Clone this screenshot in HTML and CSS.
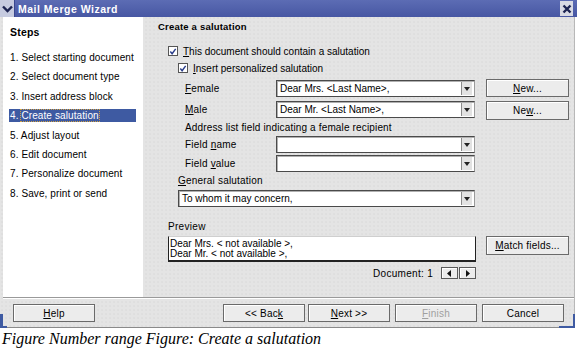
FILE: index.html
```html
<!DOCTYPE html>
<html lang="en">
<head>
  <meta charset="UTF-8" />
  <title>Mail Merge Wizard</title>
  <link rel="stylesheet" href="styles.css">
</head>
<body>
  <div class="window">
    <div class="titlebar">
      <div class="tb-icon">
        <svg width="11" height="8" viewBox="0 0 11 8"><path d="M1 1.5 L5.5 6 L10 1.5" fill="none" stroke="#1c2452" stroke-width="2.4"/></svg>
      </div>
      <div class="tb-title">Mail Merge Wizard</div>
      <div class="tb-close">
        <svg width="10" height="10" viewBox="0 0 10 10"><path d="M1.5 1.5 L8.5 8.5 M8.5 1.5 L1.5 8.5" stroke="#1c2452" stroke-width="2.4"/></svg>
      </div>
    </div>

    <div class="main">
      <!-- steps list -->
      <div class="steps">
        <div class="steps-head">Steps</div>
        <ul class="step-list">
          <li>1. Select starting document</li>
          <li>2. Select document type</li>
          <li>3. Insert address block</li>
          <li class="active"><span>4. <em>Create salutation</em></span></li>
          <li>5. Adjust layout</li>
          <li>6. Edit document</li>
          <li>7. Personalize document</li>
          <li>8. Save, print or send</li>
        </ul>
      </div>

      <!-- page content -->
      <div class="page">
        <div class="page-title">Create a salutation</div>

        <label class="check check-1"><span class="box"><svg width="9" height="9" viewBox="0 0 9 9"><path d="M1.5 4.5 L3.5 7 L7.5 1.5" fill="none" stroke="#2a3d8a" stroke-width="1.6"/></svg></span><span><u>T</u>his document should contain a salutation</span></label>
        <label class="check check-2"><span class="box"><svg width="9" height="9" viewBox="0 0 9 9"><path d="M1.5 4.5 L3.5 7 L7.5 1.5" fill="none" stroke="#2a3d8a" stroke-width="1.6"/></svg></span><span><u>I</u>nsert personalized salutation</span></label>

        <div class="field-row row-female">
          <span class="field-label"><u>F</u>emale</span>
          <div class="select"><span class="select-text">Dear Mrs. &lt;Last Name&gt;,</span><span class="drop"></span></div>
          <button class="btn btn-side"><u>N</u>ew...</button>
        </div>
        <div class="field-row row-male">
          <span class="field-label"><u>M</u>ale</span>
          <div class="select"><span class="select-text">Dear Mr. &lt;Last Name&gt;,</span><span class="drop"></span></div>
          <button class="btn btn-side">Ne<u>w</u>...</button>
        </div>

        <div class="plain-label">Address list field indicating a female recipient</div>

        <div class="field-row row-fname">
          <span class="field-label">Field <u>n</u>ame</span>
          <div class="select"><span class="select-text"></span><span class="drop"></span></div>
        </div>
        <div class="field-row row-fvalue">
          <span class="field-label">Field <u>v</u>alue</span>
          <div class="select"><span class="select-text"></span><span class="drop"></span></div>
        </div>

        <div class="general-label"><u>G</u>eneral salutation</div>
        <div class="select select-wide"><span class="select-text">To whom it may concern,</span><span class="drop"></span></div>

        <div class="preview-label">Preview</div>
        <div class="preview-row">
          <div class="preview-box">
            <div>Dear Mrs. &lt; not available &gt;,</div>
            <div>Dear Mr. &lt; not available &gt;,</div>
          </div>
          <button class="btn btn-side btn-match"><u>M</u>atch fields...</button>
        </div>

        <div class="doc-row">
          <span class="doc-text">Document: 1</span>
          <button class="arrow"><svg width="5" height="7" viewBox="0 0 5 7"><path d="M4 0 L0 3.5 L4 7 Z" fill="#111"/></svg></button>
          <button class="arrow"><svg width="5" height="7" viewBox="0 0 5 7"><path d="M1 0 L5 3.5 L1 7 Z" fill="#111"/></svg></button>
        </div>
      </div>
    </div>

    <div class="separator"></div>

    <div class="button-bar">
      <button class="btn btn-help"><u>H</u>elp</button>
      <div class="nav-buttons">
        <button class="btn">&lt;&lt; Bac<u>k</u></button>
        <button class="btn btn-next"><u>N</u>ext &gt;&gt;</button>
        <button class="btn btn-gap disabled"><u>F</u>inish</button>
        <button class="btn btn-gap">Cancel</button>
      </div>
    </div>
    <span class="corner corner-left"></span>
    <span class="corner corner-right"></span>
  </div>

  <p class="caption">Figure Number range Figure: Create a salutation</p>
</body>
</html>
```

FILE: styles.css
```css
* {
  margin: 0;
  padding: 0;
  box-sizing: border-box;
}

body {
  background: #fff;
  font-family: 'Liberation Sans', Arial, sans-serif;
  font-size: 10px;
  color: #000;
  width: 577px;
  height: 353px;
  overflow: hidden;
}

.window {
  position: relative;
  width: 575px;
  height: 328px;
  background: #e4e4e4;
  background-image: radial-gradient(#d9d9d9 0.6px, transparent 0.8px);
  background-size: 4px 4px;
  border-bottom: 1px solid #8a8a8a;
  border-right: 1px solid #b8b8b8;
}

/* title bar */
.titlebar {
  display: flex;
  align-items: center;
  height: 17px;
  width: 577px;
  background: linear-gradient(#5c6cb4, #4757a3);
}

.tb-icon {
  width: 15px;
  height: 17px;
  background: #c6cbe0;
  display: flex;
  align-items: center;
  justify-content: center;
  border-right: 1px solid #3a4890;
}

.tb-title {
  flex: 1;
  padding-left: 3px;
  color: #fff;
  font-weight: bold;
  font-size: 10.5px;
  letter-spacing: 0.5px;
}

.tb-close {
  width: 13px;
  height: 15px;
  margin-right: 4px;
  background: #d8dae4;
  display: flex;
  align-items: center;
  justify-content: center;
}

/* main area */
.main {
  display: flex;
  height: 280px;
  padding-left: 3px;
}

.steps {
  width: 140px;
  flex-shrink: 0;
  background: #fff;
  padding: 9px 0 0 7px;
}

.steps-head {
  font-size: 10.5px;
  font-weight: bold;
  height: 12px;
  line-height: 12px;
  letter-spacing: 0.2px;
}

.step-list {
  list-style: none;
  margin-top: 13px;
}

.step-list li {
  height: 19.4px;
  line-height: 13px;
  letter-spacing: 0.1px;
  white-space: nowrap;
}

.step-list li.active span {
  display: block;
  width: 127px;
  height: 13px;
  margin-left: -1px;
  padding-left: 1px;
  background: #3e5aa2;
  color: #fff;
}

.step-list li.active em {
  font-style: normal;
  outline: 1px dotted #d0a040;
}

.page {
  flex: 1;
  margin-left: 2px;
  padding-left: 13px;
  display: flex;
  flex-direction: column;
}

.page-title {
  margin-top: 4px;
  height: 12px;
  line-height: 12px;
  font-size: 9.5px;
  font-weight: bold;
  letter-spacing: 0.2px;
}

.check {
  display: flex;
  align-items: center;
  height: 12px;
  gap: 5px;
}

.check-1 {
  margin-top: 12px;
  margin-left: 10px;
}

.check-2 {
  margin-top: 5px;
  margin-left: 20px;
}

.box {
  width: 10px;
  height: 10px;
  background: #fff;
  border: 1px solid #555;
  display: flex;
  align-items: center;
  justify-content: center;
}

.field-row {
  display: flex;
  align-items: center;
  height: 18px;
  padding-left: 27px;
}

.row-female { margin-top: 5px; }
.row-male { margin-top: 3px; }
.row-fname { margin-top: 2px; height: 17px; }
.row-fvalue { margin-top: 2px; height: 17px; }

.field-label {
  width: 91px;
  flex-shrink: 0;
  letter-spacing: 0.2px;
}

.select {
  display: flex;
  flex-shrink: 0;
  width: 199px;
  height: 17px;
  background: #fff;
  border: 1px solid #4a4a4a;
  border-right-color: #9a9a9a;
  box-shadow: inset 1px 1px 0 #b0b0b0;
}

.select-text {
  flex: 1;
  padding-left: 3px;
  line-height: 15px;
  white-space: nowrap;
  overflow: hidden;
}

.drop {
  width: 11px;
  margin: 1px 2px 1px 0;
  background: #e2e2e2;
  border-left: 1px solid #8a8a8a;
  position: relative;
}

.drop::after {
  content: "";
  position: absolute;
  left: 2px;
  top: 5px;
  border-left: 3px solid transparent;
  border-right: 3px solid transparent;
  border-top: 4px solid #222;
}

.btn {
  font-family: inherit;
  font-size: 10px;
  color: #000;
  background: #ececec;
  border: 1px solid #6a6a6a;
  box-shadow: inset 1px 1px 0 #fff;
  width: 82px;
  height: 18px;
  flex-shrink: 0;
  letter-spacing: 0.2px;
}

.btn-side {
  width: 83px;
  margin-left: 11px;
}

.row-male .btn-side {
  height: 19px;
  margin-top: 3px;
}

.plain-label {
  margin-top: 4px;
  height: 12px;
  line-height: 12px;
  padding-left: 27px;
  letter-spacing: 0.15px;
}

.general-label {
  margin-top: 3px;
  height: 12px;
  line-height: 12px;
  padding-left: 20px;
  letter-spacing: 0.2px;
}

.select-wide {
  margin-top: 3px;
  margin-left: 20px;
  width: 297px;
  height: 17px;
}

.preview-label {
  margin-top: 14px;
  height: 12px;
  line-height: 12px;
  padding-left: 10px;
  letter-spacing: 0.3px;
}

.preview-row {
  display: flex;
  align-items: flex-start;
  margin-top: 3px;
  padding-left: 10px;
}

.preview-box {
  width: 308px;
  height: 26px;
  flex-shrink: 0;
  background: #fff;
  border-left: 1px solid #222;
  border-top: 1px solid #cfcfcf;
  border-bottom: 2px solid #222;
  border-right: 1px solid #222;
  padding-left: 1px;
  line-height: 10px;
  padding-top: 2px;
}

.btn-match {
  height: 19px;
  margin-left: 10px;
}

.doc-row {
  display: flex;
  align-items: center;
  margin-top: 5px;
  height: 12px;
  padding-left: 215px;
}

.doc-text {
  width: 68px;
  letter-spacing: 0.3px;
}

.arrow {
  width: 17px;
  height: 12px;
  background: #ececec;
  border: 1px solid #5a5a5a;
  box-shadow: inset 1px 1px 0 #fff;
  display: flex;
  align-items: center;
  justify-content: center;
  margin-right: 1px;
}

/* bottom */
.separator {
  height: 2px;
  margin-left: 3px;
  border-top: 1px solid #9a9a9a;
  border-bottom: 1px solid #fff;
}

.button-bar {
  display: flex;
  justify-content: space-between;
  padding: 5px 10px 0 13px;
}

.nav-buttons {
  display: flex;
}

.btn-next {
  margin-left: 3px;
}

.btn-gap {
  margin-left: 5px;
}

.btn.disabled {
  color: #a0a0a0;
}

.corner {
  position: absolute;
  bottom: -1px;
}

.corner-left {
  left: 0;
  width: 7px;
  height: 14px;
  border-left: 3px solid #3e5aa2;
  border-bottom: 2px solid #3e5aa2;
}

.corner-right {
  right: -1px;
  width: 16px;
  height: 14px;
  border-right: 2px solid #3e5aa2;
  border-bottom: 2px solid #3e5aa2;
}

.caption {
  font-family: 'Liberation Serif', 'Times New Roman', serif;
  font-style: italic;
  font-size: 16px;
  margin: 1px 0 0 2px;
  line-height: 19px;
}
```
